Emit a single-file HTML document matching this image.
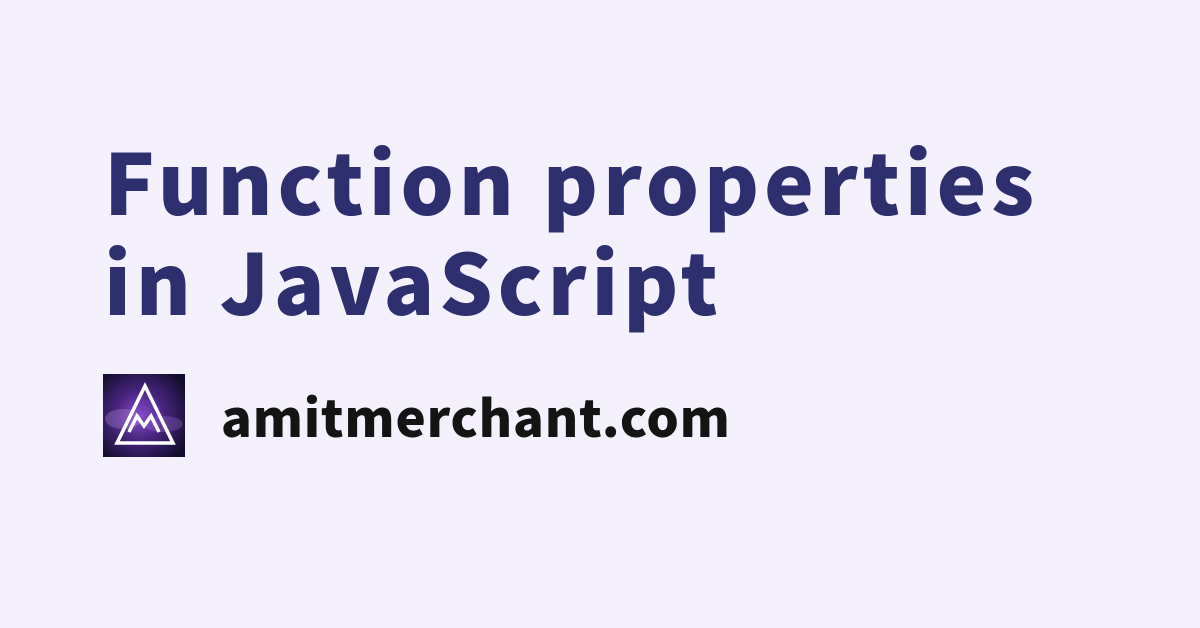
<!DOCTYPE html>
<html><head><meta charset="utf-8"><style>
html,body{margin:0;padding:0}
body{width:1200px;height:628px;background:#f4f0fc;position:relative;overflow:hidden}
.t{position:absolute;left:104px;top:130px;font-family:"Noto Sans CJK JP","Liberation Sans",sans-serif;font-weight:900;font-size:84px;line-height:100px;letter-spacing:4.8px;color:#2e2f6e;white-space:nowrap}
.d{position:absolute;left:221px;top:380px;font-family:"Noto Sans CJK JP","Liberation Sans",sans-serif;font-weight:900;font-size:51px;line-height:70px;letter-spacing:0.8px;color:#141414;white-space:nowrap}
.logo{position:absolute;left:103px;top:374px;width:82px;height:83px}
</style></head><body>
<div class="t">Function properties<br>in JavaScript</div>
<svg class="logo" viewBox="0 0 82 83">
<defs><radialGradient id="g" cx="45%" cy="50%" r="65%"><stop offset="0" stop-color="#8a4bd0"/><stop offset="0.45" stop-color="#4a2580"/><stop offset="1" stop-color="#120d2e"/></radialGradient></defs>
<rect width="82" height="83" fill="url(#g)"/>
<ellipse cx="20" cy="45" rx="18" ry="10" fill="#c59be8" opacity="0.3"/>
<ellipse cx="60" cy="50" rx="20" ry="8" fill="#b07ee0" opacity="0.25"/>
<polygon points="42,12 70,69 14,69" fill="none" stroke="#fff" stroke-width="3.5"/>
<polyline points="26,58 34,42 41,52 48,42 56,58" fill="none" stroke="#fff" stroke-width="3.5"/>
</svg>
<div class="d">amitmerchant.com</div>
</body></html>
